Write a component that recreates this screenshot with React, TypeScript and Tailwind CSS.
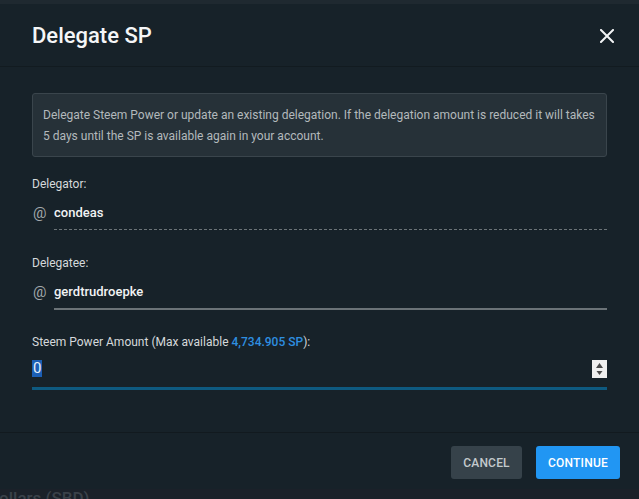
import React from "react";

export default function App() {
  return (
    <div
      className="w-[639px] h-[499px] overflow-hidden flex flex-col bg-[#1b2129]"
      style={{ fontFamily: "Roboto, 'Noto Sans', sans-serif" }}
    >
      <div className="h-[4px] shrink-0 bg-[#1f2930]" />
      <div className="h-[485px] shrink-0 flex flex-col bg-[#172229]">
        {/* header */}
        <div className="h-[63px] shrink-0 pl-8 pr-[25px] pt-[2px] flex items-center justify-between border-b border-[#121b20]">
          <h1 className="text-[22px] leading-[28px] font-medium text-[#f5f6f7]">Delegate SP</h1>
          <button className="w-[14px] h-[14px] flex items-center justify-center">
            <svg width="14" height="14" viewBox="0 0 14 14">
              <path d="M1 1 L13 13 M13 1 L1 13" stroke="#f2f4f5" strokeWidth="2" strokeLinecap="square" />
            </svg>
          </button>
        </div>

        {/* body */}
        <div className="flex-1 px-8 pt-[26px] flex flex-col">
          <div className="rounded-[3px] border border-[#3a454c] bg-[#263138] pl-[10px] pr-2 pt-[11px] pb-[9px] text-[12px] leading-[21px] text-[#b3b9bc]">
            Delegate Steem Power or update an existing delegation. If the delegation amount is reduced it will takes 5 days until the SP is available again in your account.
          </div>

          {/* delegator */}
          <div className="mt-[19px] text-[12px] leading-[16px] text-[#d5d9db]">Delegator:</div>
          <div className="mt-[11px] flex">
            <span className="w-[22px] pl-[1px] text-[15px] leading-[20px] text-[#a2a8ab]">@</span>
            <div className="flex-1 h-[27px] border-b border-dashed border-[#6c7478] text-[13px] leading-[20px] font-medium text-[#f1f3f4]">
              condeas
            </div>
          </div>

          {/* delegatee */}
          <div className="mt-[25px] text-[12px] leading-[16px] text-[#d5d9db]">Delegatee:</div>
          <div className="mt-[11px] flex">
            <span className="w-[22px] pl-[1px] text-[15px] leading-[20px] text-[#a2a8ab]">@</span>
            <div className="flex-1 h-[28px] border-b-2 border-[#6b7377] text-[13px] leading-[20px] font-medium text-[#f1f3f4]">
              gerdtrudroepke
            </div>
          </div>

          {/* amount */}
          <div className="mt-[24px] text-[12px] leading-[16px] text-[#d5d9db]">
            Steem Power Amount (Max available{" "}
            <span className="font-medium text-[#2e8fe0]">4,734.905 SP</span>):
          </div>
          <div className="mt-[10px] h-[30px] border-b-[3px] border-[#0e5a80] flex items-start justify-between">
            <span className="h-[17px] px-[1px] bg-[#1b5fb5] text-[15px] leading-[17px] text-[#e8f0fa]">0</span>
            <div className="w-[15px] h-[18px] bg-[#efefef] flex items-center justify-center">
              <svg width="9" height="14" viewBox="0 0 9 14">
                <path d="M4.5 1 L8 6 L1 6 Z" fill="#4a4a4a" />
                <path d="M1.5 9 L7.5 9 L4.5 13 Z" fill="#4a4a4a" />
              </svg>
            </div>
          </div>
        </div>

        {/* footer */}
        <div className="shrink-0 border-t border-[#121a1f] pt-[13px] pb-[10px] pr-[19px] flex justify-end gap-[14px]">
          <button className="h-[33px] w-[71px] rounded-[3px] bg-[#36424a] text-[12px] font-medium text-[#c4cacd] tracking-[0.2px]">
            CANCEL
          </button>
          <button className="h-[33px] w-[84px] rounded-[3px] bg-[#2196f3] text-[12px] font-medium text-white tracking-[0.2px]">
            CONTINUE
          </button>
        </div>
      </div>
      <div className="flex-1 overflow-hidden">
        <div className="-ml-[12px] -mt-[1px] text-[17px] leading-[20px] font-medium text-[#3a4149]">Dollars (SBD)</div>
      </div>
    </div>
  );
}
